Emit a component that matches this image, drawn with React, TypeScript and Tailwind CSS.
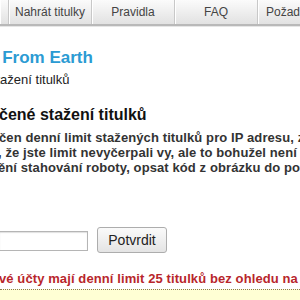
export default function App() {
  const tab =
    "flex items-center justify-center h-full border-r border-[#c8c8c8] shadow-[inset_1px_0_0_#ffffff] text-[12px] text-[#444] whitespace-nowrap";
  return (
    <div className="w-[300px] h-[300px] overflow-hidden bg-white font-['Liberation_Sans',Arial,sans-serif] text-[#222]">
      <div className="flex h-[26px] bg-gradient-to-b from-[#fbfbfb] to-[#e2e2e2] border-b-2 border-[#b9b9b9]">
        <div className={`${tab} w-[9px] shrink-0`} />
        <div className={`${tab} w-[83px] shrink-0`}>Nahrát titulky</div>
        <div className={`${tab} w-[83px] shrink-0`}>Pravidla</div>
        <div className={`${tab} w-[83px] shrink-0`}>FAQ</div>
        <div className={`${tab} flex-1 justify-start pl-[8px] border-r-0`}>Požadavky</div>
      </div>
      <div className="h-px bg-[#e6e6e6]" />
      <div className="whitespace-nowrap">
        <div className="mt-[21px] ml-[-12px] text-[17px] leading-[20px] font-bold text-[#2b9bd3]">
          s From Earth
        </div>
        <div className="mt-[4px] ml-[-10px] text-[13px] leading-[16px] text-[#222]">
          stažení titulků
        </div>
        <div className="mt-[17px] ml-[-1px] text-[16px] leading-[20px] font-bold text-[#111]">
          čené stažení titulků
        </div>
        <div className="mt-[5px] text-[13px] leading-[15px] font-bold text-[#333] tracking-[0.1px]">
          <div className="ml-[-1px]">čen denní limit stažených titulků pro IP adresu, z</div>
          <div className="ml-[-2px]">, že jste limit nevyčerpali vy, ale to bohužel není</div>
          <div className="ml-[-2px]">ění stahování roboty, opsat kód z obrázku do pole</div>
        </div>
        <div className="mt-[52px] flex items-start gap-[9px]">
          <div className="mt-[4px] w-[88px] h-[20px] border border-[#b5b5b5] border-l-0 bg-white shadow-[inset_0_1px_1px_#e0e0e0]" />
          <button className="w-[70px] h-[26px] rounded-[3px] border border-[#adadad] bg-gradient-to-b from-[#fafafa] to-[#e4e4e4] text-[14px] text-[#222]">
            Potvrdit
          </button>
        </div>
        <div className="mt-[18px] ml-[-1px] text-[13px] leading-[16px] font-bold text-[#b8262c] tracking-[0.1px]">
          vé účty mají denní limit 25 titulků bez ohledu na
        </div>
        <div className="mt-[2px] h-[20px] border-t border-dotted border-[#8a7a50] bg-[#ffffd4]" />
      </div>
    </div>
  );
}
